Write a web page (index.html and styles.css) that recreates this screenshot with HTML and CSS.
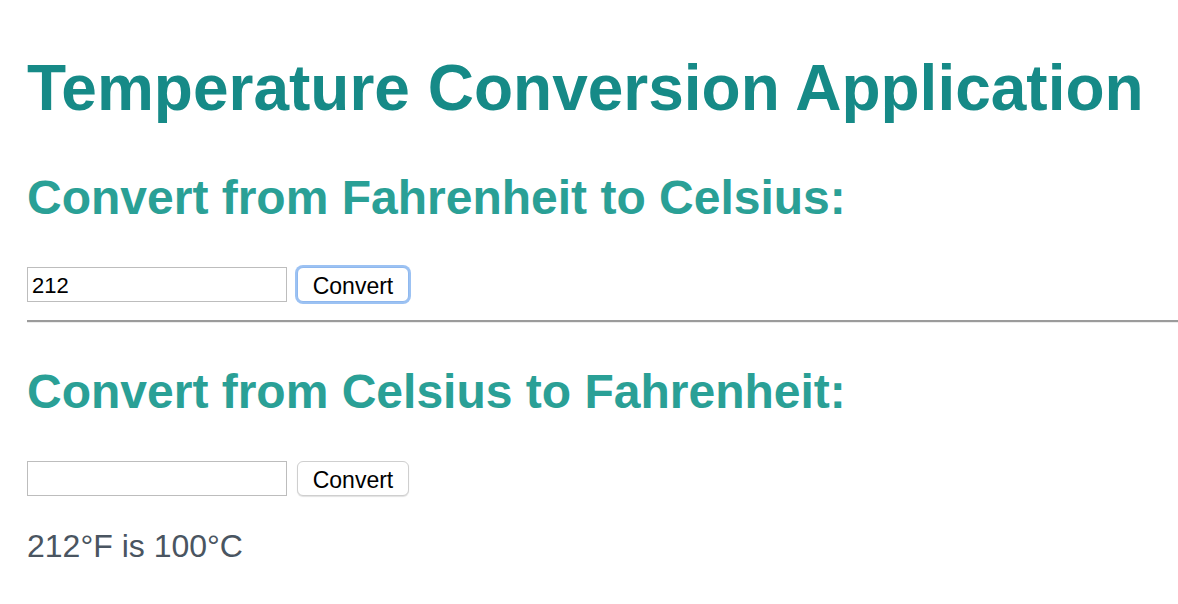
FILE: index.html
```html
<!DOCTYPE html>
<html>
<head>
<meta charset="utf-8">
<title>Temperature Conversion Application</title>
<link rel="stylesheet" href="styles.css">
</head>
<body>
<div class="page">
  <h1 class="title">Temperature Conversion Application</h1>
  <h2 class="section-title first">Convert from Fahrenheit to Celsius:</h2>
  <form class="convert-row">
    <input class="temp-input" type="text" value="212">
    <button class="convert-btn focused" type="button">Convert</button>
  </form>
  <hr class="divider">
  <h2 class="section-title">Convert from Celsius to Fahrenheit:</h2>
  <form class="convert-row">
    <input class="temp-input" type="text" value="">
    <button class="convert-btn" type="button">Convert</button>
  </form>
  <p class="result">212°F is 100°C</p>
</div>
</body>
</html>
```

FILE: styles.css
```css
html, body {
  margin: 0;
  padding: 0;
  background: #ffffff;
}

.page {
  padding: 0 0 0 27px;
  font-family: "Liberation Sans", Arial, sans-serif;
}

.title {
  margin: 51px 0 0 0;
  font-size: 64px;
  line-height: 74px;
  font-weight: bold;
  color: #168a87;
}

.section-title {
  margin: 39px 0 0 0;
  font-size: 48px;
  line-height: 60px;
  font-weight: bold;
  color: #2aa096;
}

.section-title.first {
  margin-top: 43px;
}

.convert-row {
  display: flex;
  align-items: center;
  gap: 10px;
  margin: 39px 0 0 0;
}

.temp-input {
  box-sizing: border-box;
  width: 260px;
  height: 35px;
  margin: 0;
  padding: 2px 4px 0 4px;
  border: 1px solid #bdbdbd;
  border-radius: 0;
  font-family: "Liberation Sans", Arial, sans-serif;
  font-size: 22px;
  color: #000;
  outline: none;
}

.convert-btn {
  box-sizing: border-box;
  width: 112px;
  height: 35px;
  margin: 0;
  padding: 3px 0 0 0;
  border: 1px solid #cfcfcf;
  border-radius: 6px;
  background: #ffffff;
  box-shadow: 0 1px 1px rgba(0, 0, 0, 0.12);
  font-family: "Liberation Sans", Arial, sans-serif;
  font-size: 23px;
  color: #000;
}

.convert-btn.focused {
  border-color: #8fb8ee;
  box-shadow: 0 0 0 2px #9cc2f3;
}

.divider {
  margin: 18px 0 0 0;
  height: 0;
  border: 0;
  border-top: 2px solid #9b9b9b;
  border-bottom: 1px solid #ececec;
}

.result {
  margin: 30px 0 0 0;
  font-size: 32px;
  line-height: 40px;
  color: #4a5561;
}
```
